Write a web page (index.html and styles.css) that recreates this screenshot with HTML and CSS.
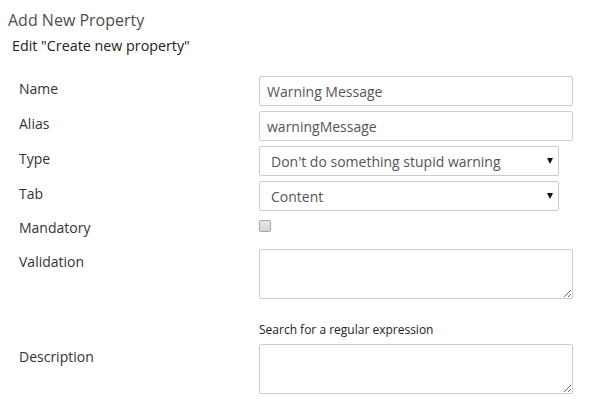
FILE: index.html
```html
<!DOCTYPE html>
<html>
<head>
<meta charset="utf-8">
<link rel="stylesheet" href="styles.css">
</head>
<body>
<div class="panel">
  <h1 class="title">Add New Property</h1>
  <h2 class="subtitle">Edit "Create new property"</h2>
  <form class="form">
    <div class="row">
      <label class="label">Name</label>
      <div class="control"><input class="input" type="text" value="Warning Message"></div>
    </div>
    <div class="row">
      <label class="label">Alias</label>
      <div class="control"><input class="input" type="text" value="warningMessage"></div>
    </div>
    <div class="row">
      <label class="label">Type</label>
      <div class="control">
        <div class="select-wrap">
          <select class="select"><option>Don't do something stupid warning</option></select>
        </div>
      </div>
    </div>
    <div class="row">
      <label class="label">Tab</label>
      <div class="control">
        <div class="select-wrap">
          <select class="select"><option>Content</option></select>
        </div>
      </div>
    </div>
    <div class="row row-check">
      <label class="label label-check">Mandatory</label>
      <div class="control"><input class="check" type="checkbox"></div>
    </div>
    <div class="row">
      <label class="label">Validation</label>
      <div class="control">
        <textarea class="textarea"></textarea>
        <p class="help">Search for a regular expression</p>
      </div>
    </div>
    <div class="row">
      <label class="label">Description</label>
      <div class="control"><textarea class="textarea"></textarea></div>
    </div>
  </form>
</div>
</body>
</html>
```

FILE: styles.css
```css
html, body {
  margin: 0;
  padding: 0;
  background: #fff;
}
body {
  font-family: "Open Sans", "DejaVu Sans", sans-serif;
  color: #333;
}
.panel {
  padding: 9px 0 0 8px;
}
.title {
  margin: 0;
  font-size: 16px;
  line-height: 22px;
  font-weight: 400;
  color: #4d4d4d;
}
.subtitle {
  margin: 5px 0 0 4px;
  font-size: 14.3px;
  line-height: 20px;
  font-weight: 400;
  color: #222;
}
.form {
  margin-top: 20px;
  padding-left: 11px;
  display: flex;
  flex-direction: column;
  gap: 5px;
}
.row {
  display: flex;
  align-items: flex-start;
}
.label {
  width: 240px;
  flex: none;
  padding-top: 3px;
  font-size: 14px;
  line-height: 20px;
  color: #333;
}
.control {
  display: flex;
  flex-direction: column;
}
.input {
  box-sizing: border-box;
  width: 314px;
  height: 30px;
  margin: 0;
  padding: 0 7px;
  border: 1px solid #ccc;
  border-radius: 2px;
  font-family: inherit;
  font-size: 14px;
  color: #555;
  background: #fff;
  outline: none;
}
.select-wrap {
  position: relative;
  width: 300px;
}
.select-wrap::after {
  content: "";
  position: absolute;
  right: 6px;
  top: 12px;
  border-left: 3.5px solid transparent;
  border-right: 3.5px solid transparent;
  border-top: 6px solid #111;
}
.select {
  -webkit-appearance: none;
  appearance: none;
  box-sizing: border-box;
  width: 300px;
  height: 30px;
  margin: 0;
  padding: 0 20px 0 11px;
  border: 1px solid #ccc;
  border-radius: 2px;
  background: #fff;
  font-family: inherit;
  font-size: 14px;
  color: #555;
  outline: none;
}
.row-check {
  height: 28px;
}
.label-check {
  padding-top: 2px;
}
.check {
  -webkit-appearance: none;
  appearance: none;
  box-sizing: border-box;
  width: 12px;
  height: 12px;
  margin: 4px 0 0 0;
  border: 1px solid #a6a6a6;
  border-radius: 2px;
  background: linear-gradient(#e8e8e8, #d6d6d6);
}
.textarea {
  box-sizing: border-box;
  width: 314px;
  height: 50px;
  margin: 0;
  padding: 4px 7px;
  border: 1px solid #ccc;
  border-radius: 2px;
  font-family: inherit;
  font-size: 14px;
  background: #fff;
  display: block;
  outline: none;
}
.help {
  margin: 22px 0 1px 0;
  font-size: 12px;
  line-height: 17px;
  color: #222;
}
```
